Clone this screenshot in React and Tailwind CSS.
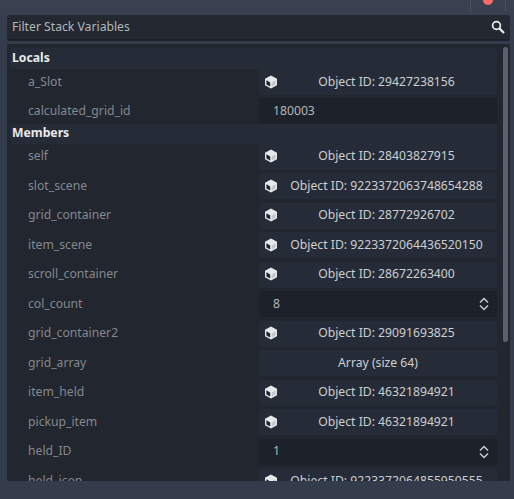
import React from "react";

const CubeIcon = () => (
  <svg width="14" height="14" viewBox="0 0 14 14" className="shrink-0 -mt-[1px]">
    <path d="M7 .6 13 3.8V10.2L7 13.4 1 10.2V3.8Z" fill="#e6e8ea" />
    <path d="M2.4 5.2 6.2 7.4V11.6L2.4 9.5Z" fill="#20252e" />
    <path d="M7.8 7.4 11.6 5.2V9.5L7.8 11.6Z" fill="#c4c7cb" />
  </svg>
);

const SearchIcon = () => (
  <svg width="14" height="14" viewBox="0 0 14 14" fill="none" stroke="#eceef0" className="shrink-0">
    <circle cx="5.5" cy="5.5" r="3.9" strokeWidth="1.7" />
    <path d="M8.5 8.5 13 13" strokeWidth="2.2" />
  </svg>
);

const SpinIcon = () => (
  <svg width="10" height="14" viewBox="0 0 10 14" fill="none" stroke="#c9ccd0" strokeWidth="1.5" className="shrink-0">
    <path d="M1 5.5 5 1.5 9 5.5" />
    <path d="M1 8.5 5 12.5 9 8.5" />
  </svg>
);

const Row = ({ name, type, value }) => (
  <div className="flex h-[26px] mb-[3.5px] items-center shrink-0">
    <div className="w-[249px] pl-[18px] text-[#84888e] truncate shrink-0">{name}</div>
    {type === "object" && (
      <div className="flex-1 h-full bg-[#262c37] rounded-[3px] flex items-center pl-[5px] pr-[2px]">
        <CubeIcon />
        <div className="flex-1 text-center text-[#ccced1] whitespace-nowrap">{value}</div>
      </div>
    )}
    {type === "text" && (
      <div className="flex-1 h-full bg-[#1d2129] rounded-[3px] flex items-center pl-[14px] text-[#b4b6ba]">{value}</div>
    )}
    {type === "spin" && (
      <div className="flex-1 h-full bg-[#1d2129] rounded-[3px] flex items-center justify-between pl-[14px] pr-[8px] text-[#b4b6ba]">
        {value}
        <SpinIcon />
      </div>
    )}
    {type === "array" && (
      <div className="flex-1 h-full bg-[#262c37] rounded-[3px] flex items-center justify-center text-[#ccced1]">{value}</div>
    )}
  </div>
);

const Header = ({ children, className }) => (
  <div className={`flex items-center pl-[2px] font-bold text-[#e8e9eb] bg-[#262c37] rounded-[3px] w-[487px] shrink-0 ${className}`}>
    {children}
  </div>
);

const locals = [
  { name: "a_Slot", type: "object", value: "Object ID: 29427238156" },
  { name: "calculated_grid_id", type: "text", value: "180003" },
];

const members = [
  { name: "self", type: "object", value: "Object ID: 28403827915" },
  { name: "slot_scene", type: "object", value: "Object ID: 9223372063748654288" },
  { name: "grid_container", type: "object", value: "Object ID: 28772926702" },
  { name: "item_scene", type: "object", value: "Object ID: 9223372064436520150" },
  { name: "scroll_container", type: "object", value: "Object ID: 28672263400" },
  { name: "col_count", type: "spin", value: "8" },
  { name: "grid_container2", type: "object", value: "Object ID: 29091693825" },
  { name: "grid_array", type: "array", value: "Array (size 64)" },
  { name: "item_held", type: "object", value: "Object ID: 46321894921" },
  { name: "pickup_item", type: "object", value: "Object ID: 46321894921" },
  { name: "held_ID", type: "spin", value: "1" },
  { name: "held_icon", type: "object", value: "Object ID: 9223372064855950555" },
];

export default function App() {
  return (
    <div className="relative w-[514px] h-[499px] overflow-hidden bg-linear-to-b from-[#3a4150] to-[#343b4a] to-[44px] text-[12.2px] font-['Noto_Sans',sans-serif] flex flex-col pl-[7px] pr-[4px] pt-[15px]">
      <div className="absolute right-[8px] top-0 w-[36px] h-[12px] border-x border-[#4a505d]">
        <div className="mx-auto -mt-[5px] w-[10px] h-[10px] rounded-full bg-[#ff6b6b]" />
      </div>
      <div className="h-[26px] shrink-0 bg-[#232831] border-b-2 border-[#1c2027] rounded-[3px] flex items-center justify-between pl-[5px] pr-[5px] text-[#b3b6ba]">
        <span>Filter Stack Variables</span>
        <SearchIcon />
      </div>
      <div className="relative mt-[3px] h-[437px] bg-[#21262f] rounded-[2px] overflow-hidden pt-[4px] pl-[3px] flex flex-col">
        <Header className="h-[21px]">Locals</Header>
        {locals.map((r, i) => (
          <div key={r.name} className={`w-[487px] ${i === 0 ? "-mb-[0.5px]" : ""}`}><Row {...r} /></div>
        ))}
        <Header className="h-[20px] -mt-[4px]">Members</Header>
        {members.map((r) => (
          <div key={r.name} className="w-[487px]"><Row {...r} /></div>
        ))}
        <div className="absolute right-[2px] top-[3px] w-[5px] h-[295px] bg-[#5b616c] rounded-[3px]" />
      </div>
    </div>
  );
}
